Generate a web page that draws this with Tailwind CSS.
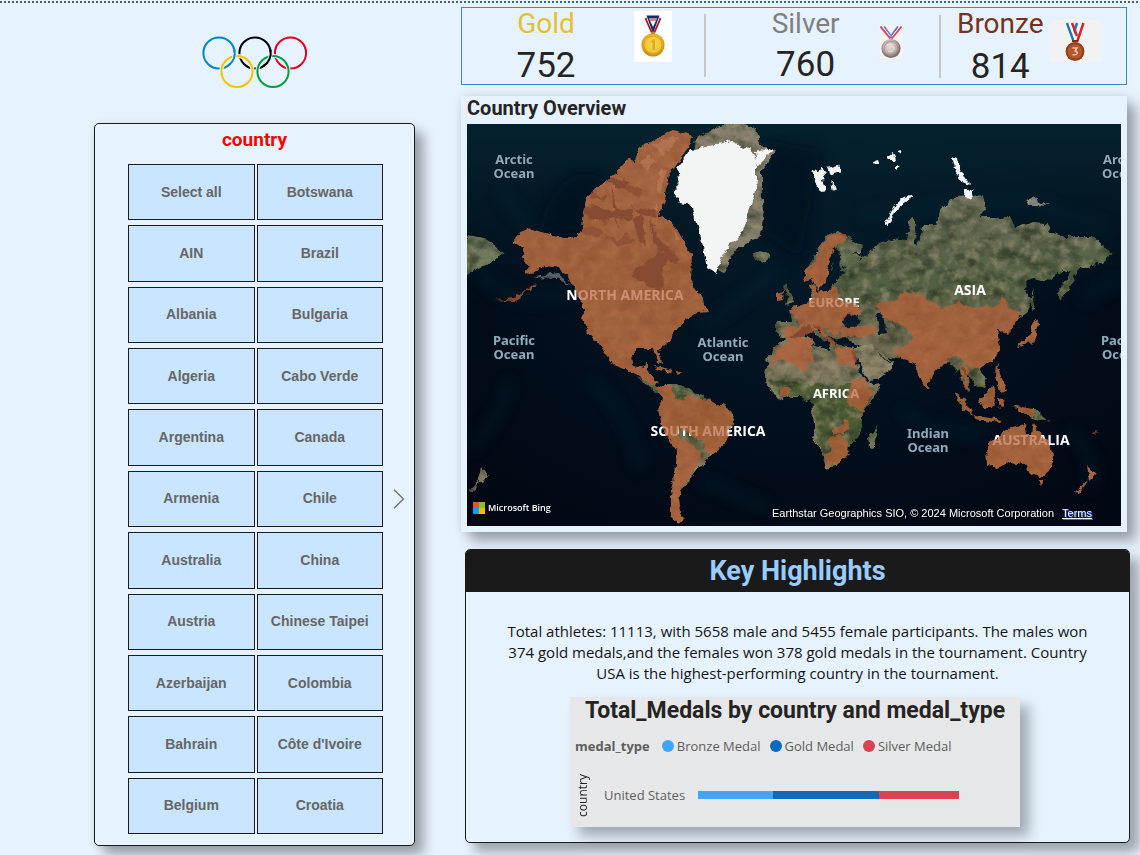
<!DOCTYPE html>
<html lang="en">
<head>
<meta charset="utf-8">
<meta name="viewport" content="width=device-width, initial-scale=1">
<title>Olympic medals dashboard</title>
<script src="https://cdn.jsdelivr.net/npm/@tailwindcss/browser@4"></script>
</head>
<body class="min-h-screen overflow-x-hidden bg-[#e6f2fe] font-['Roboto',sans-serif] text-[#252423]">
<div class="h-[3px] bg-[repeating-linear-gradient(90deg,#50606a_0_2px,transparent_2px_4px)] border-t border-[#e6f2fe]"></div>
<div class="flex items-start">

  <!-- Logo and country slicer -->
  <aside class="flex w-[461px] shrink-0 flex-col pl-[94px] pr-[46px]">
    <svg class="mt-8 h-[54px] w-[106px] self-center" viewBox="0 0 106 54" fill="none" stroke-width="2" role="img" aria-label="Olympic rings">
      <circle cx="17" cy="18" r="15.600" stroke="#0085c7"/>
      <circle cx="53" cy="18" r="15.600" stroke="#000"/>
      <circle cx="88.500" cy="18" r="15.600" stroke="#df0024"/>
      <circle cx="35" cy="36.500" r="15.600" stroke="#e6f2fe" stroke-width="4"/>
      <circle cx="71" cy="36.500" r="15.600" stroke="#e6f2fe" stroke-width="4"/>
      <circle cx="35" cy="36.500" r="15.600" stroke="#f4c300"/>
      <circle cx="71" cy="36.500" r="15.600" stroke="#009f3d"/>
      <path d="M32.600 17a15.600 15.600 0 0 1-4.500 12" stroke="#e6f2fe" stroke-width="4"/>
      <path d="M32.500 15a15.600 15.600 0 0 1-5.200 14.700" stroke="#0085c7"/>
      <path d="M68.600 17a15.600 15.600 0 0 1-6 13.300" stroke="#e6f2fe" stroke-width="4"/>
      <path d="M68.500 15a15.600 15.600 0 0 1-7.200 16.200" stroke="#000"/>
    </svg>

    <section class="mt-[34px] rounded-[5px] border border-[#1b1b1b] bg-[#e6f2fe] pb-[11px] shadow-[9px_9px_12px_rgba(0,0,0,0.32),0_0_8px_rgba(0,0,0,0.08)]">
      <h2 class="mt-1 text-center text-[19px] leading-6 font-bold text-[#ff0000]">country</h2>
      <div class="mt-3 flex items-center pl-[33px] pr-[9px]">
        <div class="grid h-[670px] flex-1 grid-cols-2 auto-rows-fr gap-x-[2px] gap-y-[5px] font-['Liberation_Sans',sans-serif] text-sm font-bold text-[#666] [&>button]:border [&>button]:border-[#1b1b1b] [&>button]:bg-[#c9e5ff] [&>button]:pb-px">
          <button>Select all</button><button>Botswana</button>
          <button>AIN</button><button>Brazil</button>
          <button>Albania</button><button>Bulgaria</button>
          <button>Algeria</button><button>Cabo Verde</button>
          <button>Argentina</button><button>Canada</button>
          <button>Armenia</button><button>Chile</button>
          <button>Australia</button><button>China</button>
          <button>Austria</button><button>Chinese Taipei</button>
          <button>Azerbaijan</button><button>Colombia</button>
          <button>Bahrain</button><button>Côte d'Ivoire</button>
          <button>Belgium</button><button>Croatia</button>
        </div>
        <button class="ml-[10px]" aria-label="More countries">
          <svg class="h-5 w-3" viewBox="0 0 12 20" fill="none" stroke="#666" stroke-width="1.200"><path d="M1 .8 10.500 10 1 19.200"/></svg>
        </button>
      </div>
    </section>
  </aside>

  <main class="min-w-0 flex-1 pr-[10px]">
    <!-- Medal totals -->
    <section class="mr-[3px] mt-1 grid h-[78px] grid-cols-[244fr_236fr_185fr] border border-[#3b86cd]">
      <div class="flex">
        <div class="ml-[54px] w-[60px] text-center"><h3 class="text-[28px] leading-8 text-[#e2c12f]">Gold</h3><p class="mt-[6px] text-[35px] leading-10">752</p></div>
        <svg class="ml-[58px] mt-[3px] h-[51px] w-[38px]" viewBox="0 0 38 51" role="img" aria-label="Gold medal">
          <defs><radialGradient id="gm" cx=".5" cy=".45"><stop offset="0" stop-color="#f8d648"/><stop offset=".7" stop-color="#f3c637"/><stop offset="1" stop-color="#c98d1b"/></radialGradient></defs>
          <path fill="#fff" d="M0 0h38v51H0z"/>
          <path d="M12 7 18.500 22M26 7l-6.500 15" stroke="#b5121b" stroke-width="3" fill="none"/>
          <path d="m13.500 7 5.500 13L24.500 7" stroke="#fff" stroke-width="2" fill="none"/>
          <path d="M12.500 4.500h13L19.500 21h-1zM15 7.500l4 8.500 4-8.500z" fill="#172a63" fill-rule="evenodd"/>
          <path d="M15.500 9h7" stroke="#b5121b" stroke-width="1"/>
          <path d="M17 22h4" stroke="#b98a22" stroke-width="2"/>
          <circle cx="19" cy="34" r="11.500" fill="url(#gm)"/>
          <circle cx="19" cy="34" r="9" fill="none" stroke="#d19b22" stroke-width=".8"/>
          <path d="m16 31 3-2.500h2V39h-2.500v-7.500z" fill="#e2a828"/>
        </svg>
        <span class="ml-auto mt-[6px] h-[63px] w-[2px] bg-[#c8c8cc]"></span>
      </div>
      <div class="flex">
        <div class="ml-[60px] w-[80px] text-center"><h3 class="text-[28px] leading-8 text-[#808080]">Silver</h3><p class="mt-[5px] text-[35px] leading-10">760</p></div>
        <svg class="ml-[33px] mt-[17px] h-[34px] w-6" viewBox="0 0 24 34" role="img" aria-label="Silver medal">
          <defs><radialGradient id="sm" cx=".45" cy=".4"><stop offset="0" stop-color="#eaded9"/><stop offset=".7" stop-color="#c1afa9"/><stop offset="1" stop-color="#81716e"/></radialGradient></defs>
          <path fill="#f3f3f5" d="M0 0h24v34H0z"/>
          <path d="m1.500 1.500 10 12M22.500 1.500l-10 12" stroke="#e0475c" stroke-width="2"/>
          <path d="m5 1.500 8 11M19 1.500l-8 11" stroke="#5875c6" stroke-width="2"/>
          <path d="m3.500 1.500 8 10M20.800 1.500l-8 10" stroke="#fff" stroke-width="1"/>
          <circle cx="12" cy="23.500" r="9.600" fill="url(#sm)"/>
          <circle cx="12" cy="23.500" r="7" fill="none" stroke="#a28f8a" stroke-width=".8"/>
          <path d="M8 20c4-2 7 0 7 3s-3 4-6 3" fill="none" stroke="#eee5e1"/>
        </svg>
        <span class="ml-auto mt-[7px] h-[63px] w-[2px] bg-[#c8c8cc]"></span>
      </div>
      <div class="flex">
        <div class="ml-[13px] w-[92px] text-center"><h3 class="text-[28px] leading-8 text-[#74331a]">Bronze</h3><p class="mt-[7px] text-[35px] leading-10">814</p></div>
        <svg class="ml-1 mt-3 h-[42px] w-[52px]" viewBox="0 0 52 42" role="img" aria-label="Bronze medal">
          <defs><radialGradient id="bm"><stop offset="0" stop-color="#ad5128"/><stop offset=".7" stop-color="#b75b2b"/><stop offset="1" stop-color="#823316"/></radialGradient></defs>
          <path fill="#f2f2f3" d="M0 0h52v42H0z"/>
          <path d="m17 3 7 19M27 3l-4 12" stroke="#1979b7" stroke-width="2.500"/>
          <path d="m19.500 3 6 17M31 3l-5 17" stroke="#fff" stroke-width="2"/>
          <path d="m22 3 5 13M33.500 3 27 22" stroke="#d52531" stroke-width="2.500"/>
          <path d="M22 21h6" stroke="#7b2d18" stroke-width="2"/>
          <circle cx="25" cy="31.500" r="9.400" fill="url(#bm)"/>
          <circle cx="25" cy="31.500" r="7.500" fill="none" stroke="#8d3d1b" stroke-width=".7"/>
          <path d="M22.500 28h4.500l-2 3c4 .5 2.500 5-2.500 3.500" fill="none" stroke="#eec4a9" stroke-width="1.500"/>
        </svg>
      </div>
    </section>

    <!-- World map -->
    <section class="mr-[3px] mt-[11px] bg-[#e6f2fe] px-[6px] pb-[6px] shadow-[9px_9px_12px_rgba(0,0,0,0.32),0_0_10px_rgba(0,0,0,0.1)]">
      <h2 class="pb-1 text-xl leading-6 font-bold">Country Overview</h2>
      <div class="relative">
        <svg class="block w-full" viewBox="467 124 654 402" role="img" aria-label="Satellite world map with medal-winning countries highlighted">
          <defs>
            <radialGradient id="sea" cx=".5" cy=".42" r=".7"><stop offset="0" stop-color="#031725"/><stop offset=".6" stop-color="#020d1b"/><stop offset="1" stop-color="#020813"/></radialGradient>
            <linearGradient id="polar" x2="0" y2="1"><stop offset="0" stop-color="#04222e"/><stop offset="1" stop-color="#04222e" stop-opacity="0"/></linearGradient>
            <linearGradient id="tone" gradientUnits="userSpaceOnUse" x1="0" y1="200" x2="0" y2="470"><stop offset="0" stop-color="#6b6d58"/><stop offset=".3" stop-color="#525f42"/><stop offset=".55" stop-color="#6d6850"/><stop offset=".8" stop-color="#475b33"/><stop offset="1" stop-color="#7a7157"/></linearGradient>
            <filter id="coast" filterUnits="userSpaceOnUse" x="467" y="124" width="654" height="402" color-interpolation-filters="sRGB">
              <feTurbulence type="fractalNoise" baseFrequency=".13" numOctaves="3" seed="4" result="n"/>
              <feDisplacementMap in="SourceGraphic" in2="n" scale="7" xChannelSelector="R" yChannelSelector="G"/>
            </filter>
            <filter id="terrain" filterUnits="userSpaceOnUse" x="467" y="124" width="654" height="402" color-interpolation-filters="sRGB">
              <feTurbulence type="fractalNoise" baseFrequency=".13" numOctaves="3" seed="4" result="n"/>
              <feDisplacementMap in="SourceGraphic" in2="n" scale="7" xChannelSelector="R" yChannelSelector="G" result="land"/>
              <feTurbulence type="fractalNoise" baseFrequency=".05 .08" numOctaves="6" seed="9"/>
              <feColorMatrix values="0 0 0 0 .12  0 0 0 0 .17  0 0 0 0 .1  1.500 0 0 0 -.600" result="dark"/>
              <feTurbulence type="fractalNoise" baseFrequency=".1" numOctaves="5" seed="21"/>
              <feColorMatrix values="0 0 0 0 .64  0 0 0 0 .6  0 0 0 0 .48  0 1.400 0 0 -.600" result="light"/>
              <feMerge result="tex"><feMergeNode in="land"/><feMergeNode in="dark"/><feMergeNode in="light"/></feMerge>
              <feComposite in="tex" in2="land" operator="in"/>
            </filter>
            <filter id="soft"><feGaussianBlur stdDeviation="7"/></filter>
            <clipPath id="frame"><path d="M467 124h654v402H467z"/></clipPath>
          </defs>
          <g clip-path="url(#frame)">
            <path fill="url(#sea)" d="M467 124h654v402H467z"/>
            <path fill="url(#polar)" d="M467 124h654v180H467z"/>
            <g filter="url(#soft)" fill="none" stroke="#07313b" stroke-width="9" opacity=".3">
              <path d="M500 190q20 30 60 70M480 270q30 45 100 20M700 330q40-30 80-60M860 215l160-15 90 30M1080 300l40-20M900 410q40 30 90 20M1070 430q30 30 20 60M470 450q30-30 40-70M700 480l70 30M640 470q-10-60-50-90"/>
            </g>
            <path d="M550 200q-30 60 25 40l30-60q-30-20-55 20zM765 140l-5 90 40 30 20-110z" fill="#010a1c" opacity=".6" filter="url(#soft)"/>

            <!-- Land surface -->
            <g filter="url(#terrain)" fill="url(#tone)">
              <path d="M467 235l18 3 12 8 8 7-8 6-17 8-13 8z" fill="#6a7458"/>
              <path id="na" d="M513 242l8-10 10-3 14 4 18 4 14 0 5-12 3-18 3-12 17-13 10-8 13-15 6 2 5-12 19-12 16-7 18 6-1 8-6 8-10 15-6 7-2 12-5 21-2 9 10 5 9 11 6 10 7 12-1 26 10 17 7 15-11 1-11 7-9 8-8 12-10 10 3 13-5-4-3-11-15 0-7 6 1 12 11 2 4-6 0 9 10 13-5 2-17-12-20-8-9-10-8-14-12-9-4-14 0-14-7-13-9-18-11-7-14-1-10 8-8-1 5-9-7-5 3-6-3-6z"/>
              <path d="M655 389l12-5 10 0 14 6 9 6 11 4 21 10 4 7-8 18-4 10-13 10-12 12-14 19-7 11 2 16 4 6-6 4-8-7 0-17 5-23 2-25-16-25-4-17 6-10z"/>
              <path d="M779 341l11-3 18-2 5 9 14 4 4-6 23 4 4 10 12 27 11-1-6 14-13 16-1 19-12 15-3 10-10 9-10 2-4-13-8-16 0-17-3-10 1-8-5-7-15 0-13 2-12-12-3-15 4-13z" fill="#7d765c"/>
              <path d="M768 380l40 4 45 0 22 13-13 16-1 19-12 15-3 10-15 9-8-12-8-17 0-17-4-18-15-6-14 1-11-12z" fill="#4c5c34"/>
              <path d="M878 425l-10 12 1 12 5-2z"/>
              <path d="M854 350l14-8 12 10 14 10-1 6-13 10-11 5-10-18zM855 345l15-20 20-3 16 9 0 28-22-3-14-9z" fill="#8c8266"/>
              <path d="M787 282l-4 5 4 9-2 9 11-2-6-10zM777 293l7-2-1 9-6 1zM753 253l6-2 10 2 2 5-8 5-8-3z"/>
              <path d="M803 270l2 11 7-2 6 11 8-9 2-17 7-18 5 3-2 19 10-3 10-2 4-6-10-4 0-9-5-6-8-7-10 4-10 10-6 16z"/>
              <path d="M833 245l14-9 15 9-1 8-9 0 6 9 10-8 12-12 15-4 12 2 2-20 6-2 1 29 8-22 12 0 4-15 15-13 28-2 3 12-6 10 30 0 5 11 18-6 14 1 3 9 17 5 26 0 20 16-6 5-12 9-15 1-10 19-10 15-2-12 12-17-7-3-13 10-17-2-10 12 10 10-6 13-10 7-10 12-10-2 3 17L993 362 980 368 987 380 984 388 975 386 968 375 963 366 957 372 950 362 943 363 932 375 927 390 920 380 914 362 900 358 885 355 870 345 855 345 845 337 838 336 838 328 850 322 845 318 838 325 828 318 830 300 810 300 812 292 830 290 836 282 831 270 834 263 846 268 842 254z"/>
              <path d="M790 309l13-4 10-7-4-12 5-3 3 9 20-4 3-10 24 30 10 20-38 12-6-4-7 0-5-12-5 1 14 14-4 3-14-17-11 5-10 9-12-4 0-13 16 0z"/>
              <path d="M955 392l9 8 9 16-10-6zM975 416l28 4-2 3-27-3zM978 400l7-5 8-10 2 10-3 13-10 0zM997 398l8 1-3 9-5-2zM997 362l3 12 7 16-7 2-4-16zM959 366l9 12 2 14-8-9zM1013 405l20 4 17 12-15-3-14-5zM1017 347l14-12 2-15 6 3-5 18-12 5zM1032 285l4 25-4 2z"/>
              <path id="au" d="M987 445l16-12 9-6 13-3 2 9 5 0 2-10 5 10 11 11 4 11-6 16-8 6-10-4-5-9-15-2-13 6-9-2z"/>
              <path d="M1038 479l7 0-3 7zM1087 466l9 8-6 6zM1089 479l-9 14-5-1zM482 466l5 12-8 6zM480 478l-5 13-6 0z"/>
              <path d="M637 376l14 7 11 11-4 1-11-9zM654 365l18 5-2 2-14-4zM676 371l9 2-8 2z"/>
              <path d="M697 136l20-8 23-7 16 8 6 19 14 1-6 11-8 10 0 20 2 20-3 26-16 8-14 12-8 16-10-3-4-25-6-20-6-20-14-2-6-20 10-8z" fill="#857e6c"/>
              <path d="M1025 200l8-3 15 9-18-1z" fill="#888"/>
            </g>

            <!-- Lakes, straits and inland seas -->
            <g filter="url(#coast)" fill="#06182a">
              <path d="M636 267l12-6 12-10 8 8-6 10 2 16-6 6-16-9-9-5zM582 207l14-1 16 6 22-4 26 3-2 6-18-2-9 6-20-4-22 4zM610 185l6 20 3 24-5-14zM632 205l4 30 10 12-3-28zM600 170l16 10 14 1-5 8-22-8zM650 215l6 22 24 24-9 2-18-22z"/>
              <path d="M580 228l14-4 10 10-10 4-12-3zM598 205l10 12-2 10-8-14zM622 176l8 10 12 4-4 8-12-8zM605 236l14 4 8-6 6 8-16 4zM660 244l14 8 6 14-12-8zM590 190l10 6 8-2-4 6-12-2z" opacity=".7"/>
              <path d="M876 313l7 2 3 18-6 1-2-10zM843 317l8-4 10 7-3 5-13 1zM832 270l6-15 3 1-1 14 5 5-14 5-6 11-2-4z"/>
              <path d="M854 350l15 32-3 1-15-31zM876 350l13 11 6-1-6 3z"/>
            </g>

            <!-- Ice and snow -->
            <g filter="url(#coast)" fill="#f3f5f5">
              <path d="M677 168l14-18 16-4 16-2 6-3 22 9 6 12 0 18-4 20-6 20-6 16-12 8-8 16-5 14-9-6-4-22-7-24-5-18-11-2-7-9 7-9z"/>
              <path d="M755 152l18-4-7 10-8 8zM812 169l6 4 4-6 5 6-5 6 4 12-5 1-6-10zM828 168l10-3 2 6-9 4zM831 181l5 6-3 4zM910 195l-14 7-7 12-4 12 3 1 5-13 9-9 11-8zM952 156l6 2 2 12 5 7 5 8-8-3-7-14zM966 188l5 4 1 8-7-3zM872 162l6-2 1 5-6 0zM886 157l7-4 2 7-6 0zM896 163l4 3-4 3zM898 150l5-1-2 6z"/>
              <path d="M640 163l10-8 5 6-8 10zM652 145l12-6 14-2-7 13-10 4zM661 168l6 1-7 25-4-9zM656 200l3 14-5-4zM672 226l8 14-4 2z" opacity=".42"/>
              <path d="M533 277l25-4 12 12-14-7z" opacity=".35"/>
            </g>

            <!-- Map labels -->
            <g fill="#92a9b7" font-family="'Noto Sans','Open Sans',sans-serif" font-size="13" font-weight="700" text-anchor="middle" stroke="#071827" stroke-width="1" paint-order="stroke">
              <text x="514" y="164">Arctic</text><text x="514" y="178">Ocean</text>
              <text x="514" y="345">Pacific</text><text x="514" y="359">Ocean</text>
              <text x="723" y="347">Atlantic</text><text x="723" y="361">Ocean</text>
              <text x="928" y="438">Indian</text><text x="928" y="452">Ocean</text>
              <text x="1103" y="164" text-anchor="start">Arctic</text><text x="1102" y="178" text-anchor="start">Ocean</text>
              <text x="1101" y="345" text-anchor="start">Pacific</text><text x="1102" y="359" text-anchor="start">Ocean</text>
            </g>
            <g fill="#fff" font-family="'Open Sans','Noto Sans',sans-serif" font-size="14" font-weight="700" text-anchor="middle">
              <text x="625" y="300">NORTH AMERICA</text>
              <text x="708" y="436">SOUTH AMERICA</text>
              <text x="834" y="307" font-size="13">EUROPE</text>
              <text x="836" y="398" font-size="13">AFRICA</text>
              <text x="970" y="295">ASIA</text>
              <text x="1031" y="445" font-size="14">AUSTRALIA</text>
            </g>

            <!-- Highlighted countries -->
            <g filter="url(#coast)" fill="#ba6038" fill-opacity=".72">
              <use href="#na"/>
              <use href="#au"/>
              <path d="M655 389l12-5 6 5 3 10 8 1 4-6 12 5 10 1 21 10 4 7-8 18-4 10-13 10-3-2-4-9-10-9-13-7-2 6 8 7 10 6 5 6-2 10-14 21-7 13 2 16 4 6-6 4-8-7 0-17 5-23 2-25-16-25-4-17 6-10z"/>
              <path d="M803 270l2 11 7-2 6 11 8-9 2-17 7-18 14-9-8-5-10 4-10 10-6 16zM777 293l7-2-1 9-6 1z"/>
              <path d="M790 309l13-4 10-7-4-12 5-3 3 9 20-4 2 12 22 7-1 9-12-1-6 10-2 9-5 2-8-8-5 1 14 14-4 3-14-17-11 5-10 9-12-4 0-13 16 0zM840 328l8-2 14 0 14 2 2 6-18 3-17 0z"/>
              <path d="M766 369l10-17 14-12 22-2 0 14 1 11-10 8-15-11-12 0zM836 348l17-1 4 8-1 10-20 0zM853 380l12-1 3 9 8 4-8 8-6 12-12-8-3-9zM781 387l8 0 0 9-8-1zM832 429l9-3 4-8 5 1-1 10-8 5-9 0zM830 437l9-2 9 7 0 13-10 9-11 2-4-13 6 0z"/>
              <path d="M875 304l22-3 3-7 12-3 15 6 4 7 12 3 17-5 13 6 14-2 8 2 8-12 5 12 14 4-7 11-8 10-10-3 3 17-7 15-13 6-8 0-11-10-6-2L943 363 932 375 927 390 920 380 914 362 900 358 893 351 905 346 914 337 906 328 892 320 882 317z"/>
              <path d="M960 366l5-2 6 8-4 4 2 16-5-5zM955 392l9 8 10 16-10-6zM975 416l28 4-2 3-27-3zM978 400l7-5 8-10 2 10-3 13-10 0zM997 398l8 1-3 9-5-2zM997 362l3 12 7 16-7 2-4-16zM1013 405l20 4 0 8-12-4zM1017 347l14-12 2-15 6 3-5 18-12 5zM1038 479l7 0-3 7zM1087 466l9 8-6 6zM1089 479l-9 14-5-1zM1093 434l6-2-4 4zM654 365l18 5-2 2-14-4zM676 371l9 2-8 2zM527 290l9-7-3 7zM495 300l19-2 16-11-14 14z"/>
            </g>
          </g>
        </svg>
        <div class="absolute bottom-[9px] left-[6px] flex items-center gap-[3px] font-['Open_Sans',sans-serif] text-[9px] leading-[18px] font-semibold text-white">
          <svg class="h-3 w-3" viewBox="0 0 12 12" aria-hidden="true"><path fill="#f25022" d="M0 0h6v6H0z"/><path fill="#8cbf26" d="M6 0h6v6H6z"/><path fill="#00a4ef" d="M0 6h6v6H0z"/><path fill="#ffb900" d="M6 6h6v6H6z"/></svg>
          <span>Microsoft Bing</span>
        </div>
        <div class="absolute right-[29px] bottom-[5px] flex gap-2 font-['Liberation_Sans',sans-serif] text-[11px] leading-4 text-white [text-shadow:1px_1px_1px_#000]">
          <span>Earthstar Geographics SIO, © 2024 Microsoft Corporation</span>
          <a href="#terms" class="underline [text-shadow:1px_1px_1px_#3c5cff]">Terms</a>
        </div>
      </div>
    </section>

    <!-- Key highlights -->
    <section class="relative mt-[17px] ml-1 rounded-[5px] border border-[#1b1b1b] bg-[#e6f2fe] pb-[15px] shadow-[9px_9px_12px_rgba(0,0,0,0.32)]">
      <h2 class="rounded-t bg-[#1a1a1a] pt-[3px] pb-[3px] text-center text-[27px] leading-9 font-bold text-[#99ccff]">Key Highlights</h2>
      <p class="mx-auto mt-[29px] max-w-[592px] text-center font-['Open_Sans',sans-serif] text-[15px] leading-[21px] text-[#151515]">Total athletes: 11113, with 5658 male and 5455 female participants. The males won 374 gold medals,and the females won 378 gold medals in the tournament. Country USA is the highest-performing country in the tournament.</p>
      <figure class="mt-[13px] mr-[109px] ml-[104px] h-[130px] bg-[#e6e7e9] px-[5px] shadow-[9px_9px_12px_rgba(0,0,0,0.3)]">
        <figcaption class="text-center text-[23px] leading-7 font-bold whitespace-nowrap">Total_Medals by country and medal_type</figcaption>
        <div class="mt-3 flex items-center font-['Open_Sans',sans-serif] text-[13px] leading-[18px] whitespace-nowrap text-[#605e5c]">
          <span class="mr-3 font-bold">medal_type</span>
          <span class="mr-[3px] h-3 w-3 rounded-full bg-[#41a4ff]"></span><span class="mr-[9px]">Bronze Medal</span>
          <span class="mr-[3px] h-3 w-3 rounded-full bg-[#0d6abf]"></span><span class="mr-[9px]">Gold Medal</span>
          <span class="mr-[3px] h-3 w-3 rounded-full bg-[#d64550]"></span><span>Silver Medal</span>
        </div>
        <div class="mt-[19px] flex items-center font-['Open_Sans',sans-serif]">
          <span class="w-4 rotate-180 text-center text-xs leading-4 [writing-mode:vertical-rl]">country</span>
          <span class="ml-[13px] w-[84px] text-[13px] whitespace-nowrap text-[#605e5c]">United States</span>
          <div class="ml-[10px] flex h-2 flex-1 pr-[56px]" role="img" aria-label="United States medals by type">
            <span class="bg-[#41a4ff]" style="width:28.8%"></span><span class="bg-[#0d6abf]" style="width:40.5%"></span><span class="bg-[#d64550]" style="width:30.7%"></span>
          </div>
        </div>
      </figure>
    </section>
  </main>
</div>
</body>
</html>
